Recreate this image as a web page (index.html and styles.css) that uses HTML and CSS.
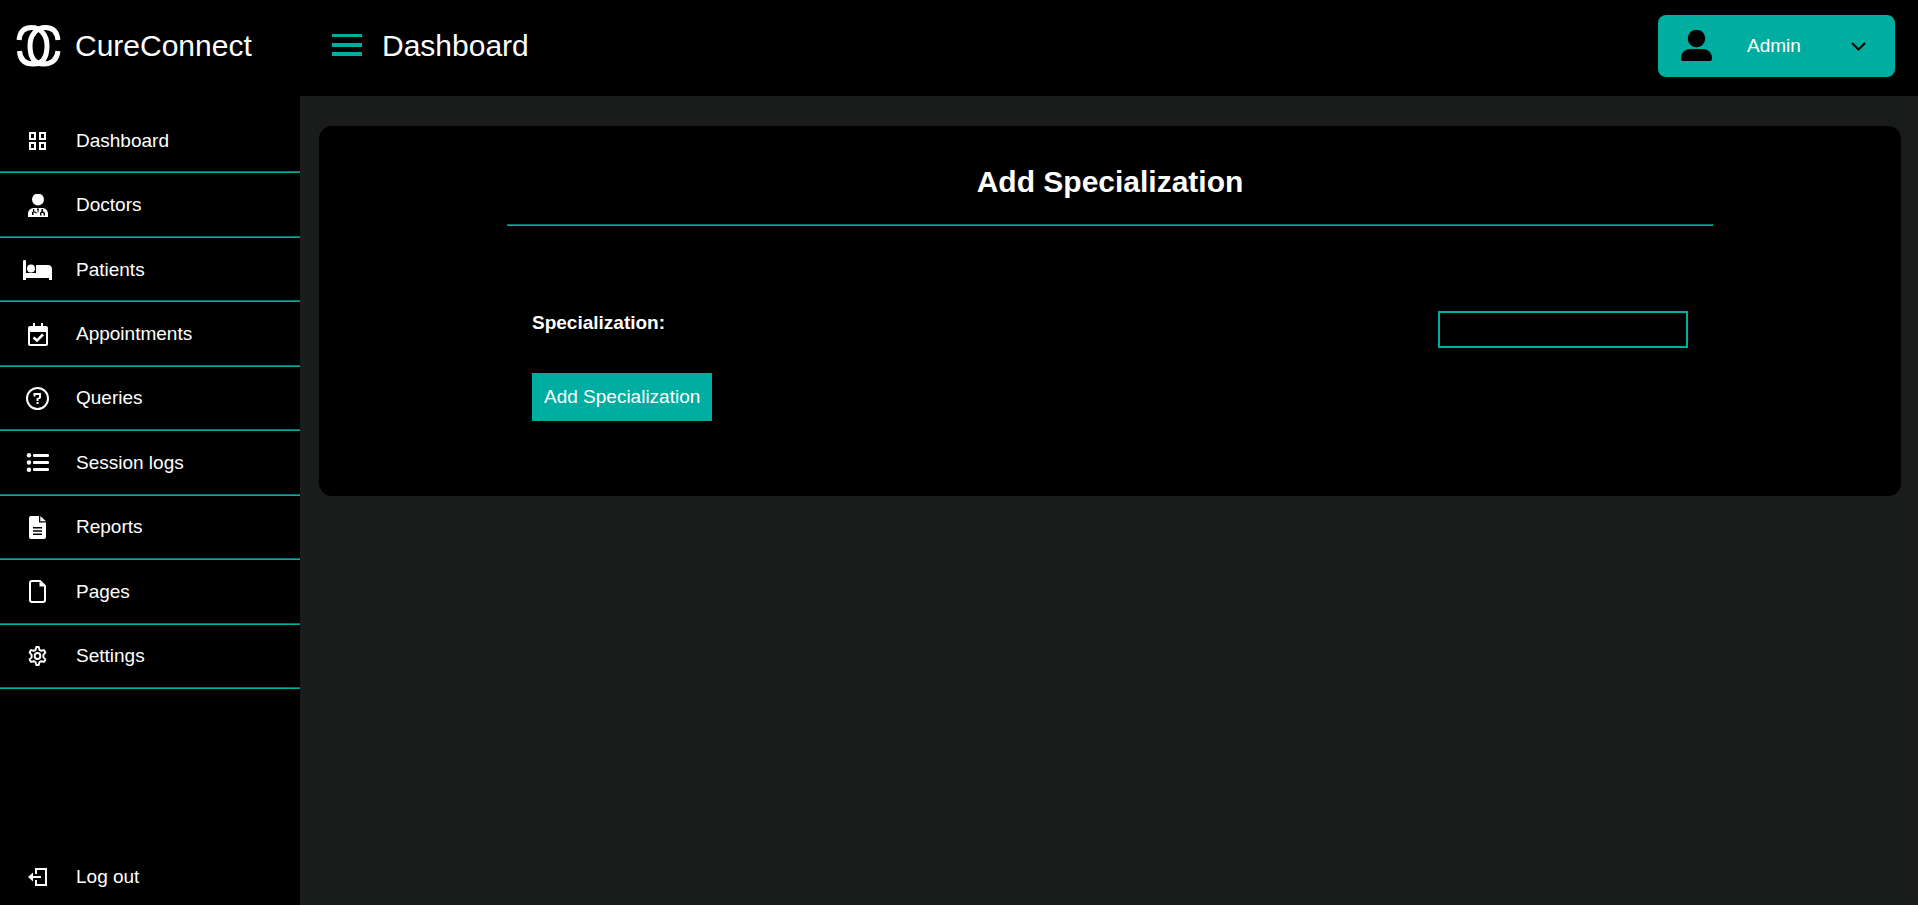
FILE: index.html
```
<!DOCTYPE html>
<html lang="en">
<head>
<meta charset="utf-8">
<meta name="viewport" content="width=device-width, initial-scale=1">
<title>CureConnect - Add Specialization</title>
<link rel="stylesheet" href="styles.css">
</head>
<body>
<div class="shell">
  <aside class="sidebar">
    <a class="brand" href="#">
      <svg class="brand-logo" viewBox="0 0 44 42" fill="none" stroke="currentColor" stroke-width="5" aria-hidden="true">
        <path d="M2.500 15C3.500 6 8 2.500 15 2.500C24 2.500 30.500 10 30.500 20.500C30.500 31 27 39 17 39C8 39 3.500 34 3 26"/>
        <path d="M41.500 15C40.500 6 36 2.500 29 2.500C20 2.500 13.500 10 13.500 20.500C13.500 31 17 39 27 39C36 39 40.500 34 41.500 26"/>
      </svg>
      <span>CureConnect</span>
    </a>
    <nav class="menu">
      <a class="item" href="#"><span class="icon"><svg width="17" height="18" viewBox="0 0 17 18" fill="none" stroke="currentColor" stroke-width="2"><path d="M1 1h5v6H1zM11 1h5v6h-5zM1 11h5v6H1zM11 11h5v6h-5z"/></svg></span>Dashboard</a>
      <a class="item" href="#"><span class="icon"><svg width="21" height="23" viewBox="-1 0 21 23" fill="currentColor"><circle cx="10" cy="5.500" r="6"/><path fill-rule="evenodd" d="M0 23v-3c0-4 3-6 6-6h8c3 0 6 2 6 6v3zM5 15H6.300V17.500L8.500 18v1.500H7.500v-.8L5.500 18.500V21H4V18l1-.5zM13.500 15H15v2.200l2 1.500V21.500H15.500V19h-2v2.500H12v-3l1.500-1.200zM9 14.500l1 5 1-5z"/></svg></span>Doctors</a>
      <a class="item" href="#"><span class="icon"><svg width="29" height="20" viewBox="0 0 29 20" fill="currentColor"><path d="M0 1.500C0 .5.500 0 1.500 0S3 .5 3 1.500V13h10V5h12c2.500 0 4 1.500 4 4v11h-3v-2H3v2H0z"/><circle cx="8" cy="8.500" r="4"/></svg></span>Patients</a>
      <a class="item" href="#"><span class="icon"><svg width="21" height="23" viewBox="-1 0 21 23" fill="currentColor"><path fill-rule="evenodd" d="M5 0h2v3h6V0h2v3h3a2 2 0 0 1 2 2v16a2 2 0 0 1-2 2H2a2 2 0 0 1-2-2V5a2 2 0 0 1 2-2h3zM2 9v12h16V9z"/><path d="M5.500 14.500l3.500 3 6-6" fill="none" stroke="currentColor" stroke-width="2.500"/></svg></span>Appointments</a>
      <a class="item" href="#"><span class="icon"><svg width="23" height="23" viewBox="0 0 23 23" fill="none" stroke="currentColor" stroke-width="2"><circle cx="11.500" cy="11.500" r="10.500"/><path d="M8.500 9.500V7H14v3.500l-2.500 1.500v2"/><path d="M11.500 15v2"/></svg></span>Queries</a>
      <a class="item" href="#"><span class="icon"><svg width="23" height="19" viewBox="-1 0 23 19" fill="currentColor"><circle cx="2" cy="2.200" r="2.200"/><circle cx="2" cy="9.500" r="2.200"/><circle cx="2" cy="16.800" r="2.200"/><rect x="6" y="1" width="16" height="3" rx="1"/><rect x="6" y="8" width="16" height="3" rx="1"/><rect x="6" y="15" width="16" height="3" rx="1"/></svg></span>Session logs</a>
      <a class="item" href="#"><span class="icon"><svg width="17" height="23" viewBox="0 0 17 23" fill="currentColor"><path fill-rule="evenodd" d="M2 0h8v6.500h7V21a2 2 0 0 1-2 2H2a2 2 0 0 1-2-2V2A2 2 0 0 1 2 0zM4 11v1.500h9V11zM4 14.300v1.500h9v-1.500zM4 17.500V19h9v-1.500z"/><path d="M11.300 0L17 5.300H11.300z"/></svg></span>Reports</a>
      <a class="item" href="#"><span class="icon"><svg width="17" height="23" viewBox="0 0 17 23" fill="currentColor"><path d="M11 1H3A2 2 0 0 0 1 3v17a2 2 0 0 0 2 2h11a2 2 0 0 0 2-2V6z" fill="none" stroke="currentColor" stroke-width="2"/><path d="M10.500 0L17 6.500H10.500z"/></svg></span>Pages</a>
      <a class="item" href="#"><span class="icon"><svg width="19" height="20" viewBox="0 0 20 20" preserveAspectRatio="none" fill="none" stroke="currentColor" stroke-width="2" stroke-linejoin="round"><path d="M8.700 1h2.600l.8 2.900 1.700.9 3-.7 1.500 2.500-2.100 2v2.800l2.100 2-1.500 2.500-3-.7-1.700.9-.8 2.900H8.700l-.8-2.900-1.700-.9-3 .7-1.500-2.500 2.100-2V8.600l-2.100-2 1.500-2.500 3 .7 1.700-.9z"/><circle cx="10" cy="10" r="3"/></svg></span>Settings</a>
    </nav>
    <a class="item logout" href="#"><span class="icon"><svg width="19" height="18" viewBox="0 0 19 18" fill="none" stroke="currentColor" stroke-width="2"><path d="M8 6V1h10v16H8v-5M13 9H3"/><path d="M5 4.500v9L0 9z" fill="currentColor" stroke="none"/></svg></span>Log out</a>
  </aside>
  <div class="page">
    <header class="topbar">
      <button class="toggle" type="button" aria-label="Toggle menu"><svg width="30" height="24" viewBox="0 0 30 24" fill="currentColor"><path d="M0 0h30v3H0zM0 9h30v4H0zM0 18h30v4H0z"/></svg></button>
      <span class="page-name">Dashboard</span>
      <button class="account" type="button">
        <svg width="31" height="32" viewBox="0 0 31 32" fill="currentColor" aria-hidden="true"><circle cx="15.500" cy="8.500" r="8.700"/><path d="M0 28.500C0 22 4.500 19 10 19h11c5.500 0 10 3 10 9.500Q31 31 29 31H2Q0 31 0 28.500z"/></svg>
        <span class="account-name">Admin</span>
        <svg width="15" height="9" viewBox="0 0 15 9" fill="none" stroke="currentColor" stroke-width="2" aria-hidden="true"><path d="M1 1l6.500 6.500L14 1"/></svg>
      </button>
    </header>
    <main class="content">
      <section class="card">
        <h1 class="card-title">Add Specialization</h1>
        <hr class="rule">
        <form class="form">
          <div class="field">
            <label class="label" for="specialization">Specialization:</label>
            <input class="input" id="specialization" type="text">
          </div>
          <button class="submit" type="submit">Add Specialization</button>
        </form>
      </section>
    </main>
  </div>
</div>
</body>
</html>
```
FILE: styles.css
```
:root {
  --accent: #00ada1;
  --accent-dark: #00746c;
}

* {
  box-sizing: border-box;
}

body {
  margin: 0;
  background: #1b1d1c;
  color: #fff;
  font-family: "Liberation Sans", Arial, sans-serif;
  font-size: 19px;
}

button,
input {
  font: inherit;
}

svg {
  display: block;
}

.shell {
  display: flex;
  min-height: 100vh;
}

.sidebar {
  display: flex;
  flex: 0 0 300px;
  flex-direction: column;
  padding-bottom: 8px;
  background: #000;
}

.brand {
  display: flex;
  align-items: center;
  gap: 14px;
  height: 96px;
  margin-bottom: 13px;
  padding: 0 16px 4px;
  color: #fff;
  font-size: 30px;
  text-decoration: none;
}

.brand-logo {
  width: 45px;
  height: 42px;
}

.menu {
  display: grid;
  grid-auto-rows: 1fr;
  height: 580px;
}

.item {
  display: flex;
  align-items: center;
  gap: 24px;
  padding: 0 23px;
  color: #fff;
  text-decoration: none;
}

.menu .item {
  border-bottom: 1px solid var(--accent);
  box-shadow: inset 0 -1px var(--accent-dark);
}

.icon {
  display: flex;
  flex: 0 0 29px;
  justify-content: center;
}

.logout {
  height: 40px;
  margin-top: auto;
}

.page {
  flex: 1;
  min-width: 0;
}

.topbar {
  display: flex;
  align-items: center;
  height: 96px;
  padding: 0 23px 4px 32px;
  background: #000;
}

.toggle {
  padding: 0;
  border: 0;
  background: none;
  color: var(--accent);
}

.page-name {
  margin-left: 20px;
  font-size: 30px;
}

.account {
  display: flex;
  align-items: center;
  width: 237px;
  height: 62px;
  margin-left: auto;
  padding: 0 29px 0 23px;
  border: 0;
  border-radius: 8px;
  background: var(--accent);
  color: #000;
}

.account-name {
  flex: 1;
  padding-left: 35px;
  color: #fff;
  text-align: left;
}

.content {
  padding: 30px 17px 30px 19px;
}

.card {
  padding: 38px 188px 75px;
  border-radius: 13px;
  background: #000;
  box-shadow: 0 0 10px rgba(0, 0, 0, 0.1);
}

.card-title {
  margin: 0;
  font-size: 30px;
  line-height: 36px;
  text-align: center;
}

.rule {
  height: 2px;
  margin: 24px 0 60px;
  border: 1px solid var(--accent);
  border-color: var(--accent-dark) var(--accent) var(--accent) var(--accent-dark);
}

.form {
  padding: 25px 25px 0;
}

.field {
  display: flex;
  justify-content: space-between;
  margin-bottom: 25px;
}

.label {
  font-weight: bold;
  line-height: 24px;
}

.input {
  width: 250px;
  height: 37px;
  padding: 0 8px;
  border: 2px solid var(--accent);
  background: #000;
  color: #fff;
}

.submit {
  height: 48px;
  padding: 0 12px;
  border: 0;
  background: var(--accent);
  color: #fff;
}
```
